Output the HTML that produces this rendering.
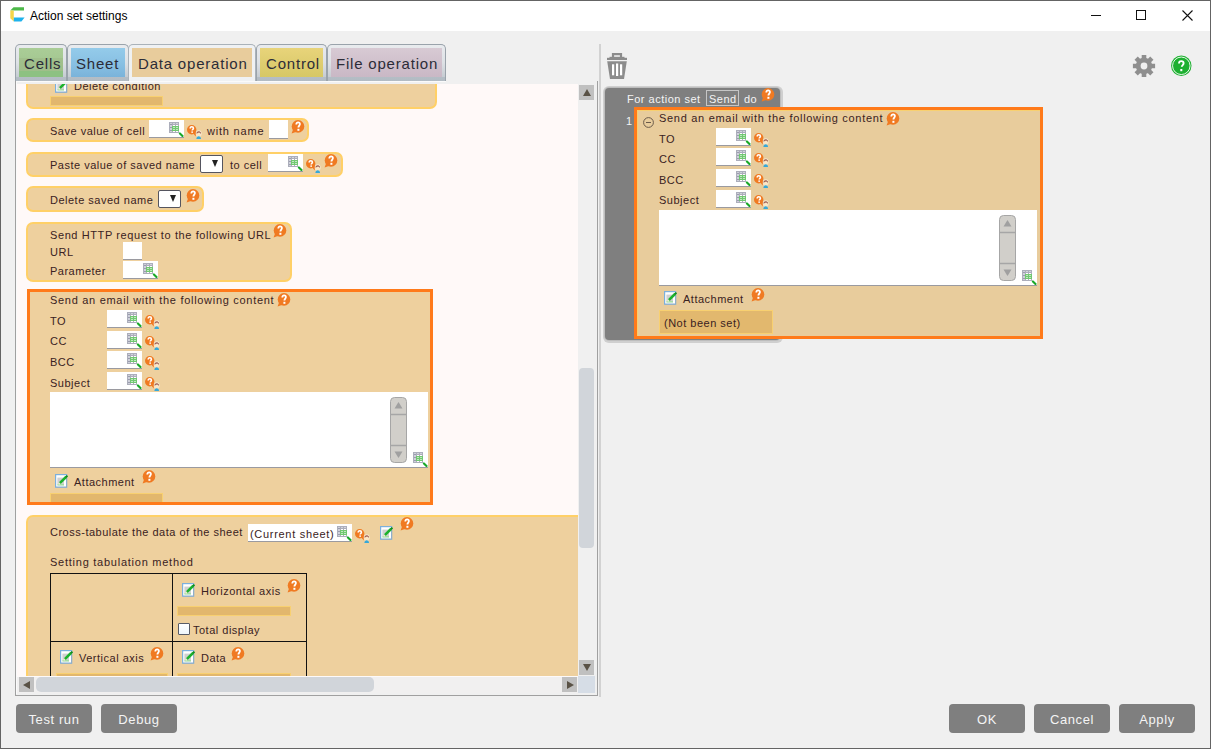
<!DOCTYPE html>
<html><head><meta charset="utf-8">
<style>
*{box-sizing:border-box;margin:0;padding:0}
html,body{width:1211px;height:749px;overflow:hidden;background:#f0f0f0;font-family:"Liberation Sans",sans-serif;position:relative}
.a{position:absolute}
.t{position:absolute;font-size:11px;letter-spacing:0.5px;line-height:14px;white-space:pre;color:#3a2222}
.w{color:#f4f4f4}
.win{left:0;top:0;width:1211px;height:749px;border:1px solid #646464}
.title{left:1px;top:1px;width:1209px;height:30px;background:#fff}
.tab{position:absolute;top:44px;height:37px;border:1px solid #9aa3ab;border-bottom:none;border-radius:5px 5px 0 0;background:linear-gradient(#e9ebee,#dde1e5 50%,#c6ccd2 88%,#b4bdc5 89%,#b2bbc3)}
.tab .in{position:absolute;top:3px;bottom:4px;left:3px;right:3px}
.tab .tx{position:absolute;top:10px;font-size:15px;letter-spacing:0.8px;line-height:18px;white-space:pre;color:#2c2c38}
.panel{left:15px;top:81px;width:583px;height:615px;border:1px solid #a0a0a0;border-top:none;background:#f0f0f0}
.view{left:17px;top:84px;width:561px;height:592px;background:#fff9f8;overflow:hidden}
.pg{position:absolute;left:-17px;top:-84px;width:1211px;height:749px}
.box{position:absolute;background:#eed09e;border:2px solid #ffd067;border-radius:7px}
.sel{position:absolute;border:3px solid #ff7a1a}
.inp{position:absolute;background:#fff;border-bottom:1px solid #9a9aa0}
.bar{position:absolute;background:#e2b76d;border:1px solid #f8d070}
.dd{position:absolute;width:23px;height:18px;background:#fff;border:1px solid #55555f;border-radius:2px}
.dd:after{content:"";position:absolute;left:11px;top:4px;border-left:3.5px solid transparent;border-right:3.5px solid transparent;border-top:7px solid #222}
.btn{position:absolute;top:704px;width:76px;height:29px;background:#7f7f7f;border-radius:4px;color:#f4f4f4;font-size:13px;letter-spacing:0.6px;line-height:14px;padding-top:9px;text-align:center}
svg.i{position:absolute;overflow:visible}
.q{width:14px;height:14px}
.qp{width:15px;height:15px}
.g{width:15px;height:15px}
.e{width:13px;height:14px}
.sb{position:absolute;width:17px;height:66px}
</style></head><body>
<svg width="0" height="0" style="position:absolute">
<defs>
<symbol id="q" viewBox="0 0 14 14"><circle cx="7" cy="6.4" r="6.3" fill="#f07a22"/><path d="M2 9.5 L0.6 13.6 L5.6 11.8Z" fill="#f07a22"/><path d="M5.3 4.4C5.3 3 6.1 2.4 7.1 2.4S8.9 3 8.9 4.1C8.9 5.5 7.4 5.7 7.4 7.6" fill="none" stroke="#fff" stroke-width="1.8"/><rect x="6.4" y="8.8" width="2" height="2" fill="#fff"/></symbol>
<symbol id="qp" viewBox="0 0 15 15"><circle cx="4.7" cy="4.7" r="4.7" fill="#f07a22"/><path d="M6 8.3 L8.8 11.4 L8.9 6.8Z" fill="#f07a22"/><path d="M3.2 3.5c0-1.2.7-1.8 1.6-1.8s1.6.6 1.6 1.6c0 1.2-1.2 1.2-1.2 2.3" fill="none" stroke="#fff" stroke-width="1.6"/><rect x="4.4" y="6.4" width="1.5" height="1.5" fill="#fff"/><ellipse cx="11.7" cy="8.6" rx="3" ry="3.4" fill="#fff" opacity="0.45"/><path d="M10 8 H13.4 V9.6 C13.4 10.5 12.6 10.9 11.7 10.9 S10 10.5 10 9.6Z" fill="#fde6c4"/><path d="M9.6 8.4 C9.4 5.9 14 5.9 13.8 8.4 L13.2 8.4 L12.9 7.6 L10.5 7.6 L10.2 8.4Z" fill="#7c2a24"/><path d="M9.4 14 C9.4 12.2 10.5 11.3 11.7 11.3 S14 12.2 14 14Z" fill="#36a8d8"/></symbol>
<symbol id="grid" viewBox="0 0 15 15"><g shape-rendering="crispEdges"><rect x="0" y="0" width="10" height="11" fill="#acaebb"/><rect x="1" y="1" width="2" height="9" fill="#cfd1da"/><rect x="1" y="2" width="2" height="1" fill="#9a9cae"/><rect x="1" y="5" width="2" height="1" fill="#9a9cae"/><rect x="1" y="8" width="2" height="1" fill="#9a9cae"/><rect x="4" y="1" width="2" height="1" fill="#d2d4dc"/><rect x="7" y="1" width="2" height="1" fill="#d2d4dc"/><rect x="4" y="3" width="2" height="1" fill="#fff"/><rect x="7" y="3" width="2" height="1" fill="#fff"/><rect x="4" y="9" width="2" height="1" fill="#fff"/><rect x="7" y="9" width="2" height="1" fill="#fff"/><rect x="3" y="4" width="7" height="5" fill="#70c870"/><rect x="4" y="5" width="2" height="1" fill="#c0e8c0"/><rect x="7" y="5" width="2" height="1" fill="#c0e8c0"/><rect x="4" y="7" width="2" height="1" fill="#c0e8c0"/><rect x="7" y="7" width="2" height="1" fill="#c0e8c0"/></g><path d="M10.9 11.4 L13.5 14" stroke="#18a828" stroke-width="2.1" stroke-linecap="round"/></symbol>
<symbol id="edit" viewBox="0 0 13 14"><rect x="0.6" y="0.6" width="11" height="12.6" fill="#fff" stroke="#7db0dc" stroke-width="1.2"/><path d="M11.6 1.5V13.3H1" fill="none" stroke="#98aec4" stroke-width="0.8"/><rect x="2.4" y="3.6" width="6.6" height="6.8" fill="#d0d0d0"/><rect x="2.4" y="10" width="6.6" height="1.6" fill="#a6dca6"/><path d="M4.8 9.2 L11 3" stroke="#1cb22c" stroke-width="2.5"/><path d="M10.6 3.4 L12.4 1.6" stroke="#0f8f1e" stroke-width="2"/><path d="M3.6 10.4 L4.9 9.1" stroke="#e8f0c8" stroke-width="1.6"/></symbol>
<symbol id="tsb" viewBox="0 0 17 66"><rect x="0.5" y="0.5" width="16" height="65" rx="4" fill="#d1cfca" stroke="#a6a6a6"/><path d="M1 17.5H16M1 48.5H16" stroke="#a6a6a6" stroke-width="1.4"/><path d="M8.5 5 L12.5 11.5 H4.5Z" fill="#a0a0a0"/><path d="M8.5 61 L12.5 54.5 H4.5Z" fill="#a0a0a0"/></symbol>
</defs></svg>

<div class="a win"></div>
<div class="a title"></div>
<svg class="i" style="left:10px;top:7px" width="15" height="15" viewBox="0 0 15 15"><path d="M3.5 0.3 L14 0.3 L14 3.6 L0.3 3.6Z" fill="#4cb848"/><path d="M0.3 3.6 L3.8 3.6 L3.8 14.6 L0.3 11.2Z" fill="#f5d54a"/><path d="M3.8 10.6 L14.6 10.6 L11.4 14.6 L3.8 14.6Z" fill="#1fb2ec"/></svg>
<div class="t" style="left:30px;top:9px;color:#000;font-size:12px;letter-spacing:0">Action set settings</div>
<div class="a" style="left:1091px;top:15px;width:10px;height:1px;background:#111"></div>
<div class="a" style="left:1136px;top:10px;width:10px;height:10px;border:1px solid #111"></div>
<svg class="i" style="left:1182px;top:10px" width="11" height="11"><path d="M0.5 0.5L10.5 10.5M10.5 0.5L0.5 10.5" stroke="#111" stroke-width="1.1"/></svg>

<!-- tabs -->
<div class="tab" style="left:15px;width:52px"><div class="in" style="background:linear-gradient(#aacd97,#a6c993 33%,#a1c08c 34%,#9fbe8a 80%,#8dc182 81%)"></div><div class="tx" style="left:8px">Cells</div></div>
<div class="tab" style="left:67px;width:62px"><div class="in" style="background:linear-gradient(#94cbea,#88c0e3 55%,#7ab3da)"></div><div class="tx" style="left:8px">Sheet</div></div>
<div class="tab" style="left:128px;width:128px;height:40px;background:#eff1f3;border-color:#aab2b9"><div class="in" style="bottom:7px;background:#e8cc9c"></div><div class="tx" style="left:9px">Data operation</div></div>
<div class="tab" style="left:256px;width:71px"><div class="in" style="background:linear-gradient(#e8d47a,#dfcd70 50%,#d6c866)"></div><div class="tx" style="left:9px">Control</div></div>
<div class="tab" style="left:327px;width:119px"><div class="in" style="background:linear-gradient(#d8cad4,#d0c0cc 55%,#c9b8c5)"></div><div class="tx" style="left:8px">File operation</div></div>

<!-- left panel -->
<div class="a panel"></div>
<div class="a" style="left:16px;top:81px;width:430px;height:1px;background:#fafafa"></div>
<div class="a" style="left:16px;top:82px;width:1px;height:612px;background:#fafafa"></div>
<div class="a view"><div class="pg">
  <div class="box" style="left:26px;top:44px;width:411px;height:65px"></div>
  <svg class="i e" style="left:55px;top:79px"><use href="#edit"/></svg>
  <div class="t" style="left:74px;top:79px">Delete condition</div>
  <div class="bar" style="left:50px;top:96px;width:113px;height:10px"></div>

  <div class="box" style="left:26px;top:118px;width:283px;height:24px"></div>
  <div class="t" style="left:50px;top:124px">Save value of cell</div>
  <div class="inp" style="left:149px;top:120px;width:35px;height:18px"></div>
  <svg class="i g" style="left:169px;top:122px"><use href="#grid"/></svg>
  <svg class="i qp" style="left:187px;top:125px"><use href="#qp"/></svg>
  <div class="t" style="left:207px;top:124px;letter-spacing:0.8px">with name</div>
  <div class="inp" style="left:269px;top:120px;width:19px;height:19px"></div>
  <svg class="i q" style="left:291px;top:120px"><use href="#q"/></svg>

  <div class="box" style="left:26px;top:152px;width:317px;height:25px"></div>
  <div class="t" style="left:50px;top:158px">Paste value of saved name</div>
  <div class="dd" style="left:200px;top:155px"></div>
  <div class="t" style="left:230px;top:158px">to cell</div>
  <div class="inp" style="left:268px;top:154px;width:35px;height:18px"></div>
  <svg class="i g" style="left:288px;top:156px"><use href="#grid"/></svg>
  <svg class="i qp" style="left:306px;top:159px"><use href="#qp"/></svg>
  <svg class="i q" style="left:324px;top:154px"><use href="#q"/></svg>

  <div class="box" style="left:26px;top:186px;width:178px;height:26px"></div>
  <div class="t" style="left:50px;top:193px">Delete saved name</div>
  <div class="dd" style="left:158px;top:190px"></div>
  <svg class="i q" style="left:186px;top:189px"><use href="#q"/></svg>

  <div class="box" style="left:26px;top:222px;width:266px;height:60px"></div>
  <div class="t" style="left:50px;top:228px;letter-spacing:0.6px">Send HTTP request to the following URL</div>
  <svg class="i q" style="left:273px;top:224px"><use href="#q"/></svg>
  <div class="t" style="left:50px;top:245px">URL</div>
  <div class="inp" style="left:123px;top:242px;width:19px;height:18px"></div>
  <div class="t" style="left:50px;top:264px">Parameter</div>
  <div class="inp" style="left:123px;top:261px;width:35px;height:18px"></div>
  <svg class="i g" style="left:143px;top:263px"><use href="#grid"/></svg>

  <!-- email box -->
  <div class="box" style="left:28px;top:290px;width:403px;height:214px;border-width:2px 1px 0 1px;border-radius:0"></div>
  <div class="t" style="left:50px;top:293px;letter-spacing:0.7px">Send an email with the following content</div>
  <svg class="i q" style="left:277px;top:293px"><use href="#q"/></svg>
  <div class="t" style="left:50px;top:314px">TO</div>
  <div class="t" style="left:50px;top:334px">CC</div>
  <div class="t" style="left:50px;top:355px">BCC</div>
  <div class="t" style="left:50px;top:376px">Subject</div>
  <div class="inp" style="left:107px;top:310px;width:35px;height:18px"></div>
  <div class="inp" style="left:107px;top:331px;width:35px;height:18px"></div>
  <div class="inp" style="left:107px;top:351px;width:35px;height:18px"></div>
  <div class="inp" style="left:107px;top:372px;width:35px;height:18px"></div>
  <svg class="i g" style="left:127px;top:312px"><use href="#grid"/></svg>
  <svg class="i g" style="left:127px;top:333px"><use href="#grid"/></svg>
  <svg class="i g" style="left:127px;top:353px"><use href="#grid"/></svg>
  <svg class="i g" style="left:127px;top:374px"><use href="#grid"/></svg>
  <svg class="i qp" style="left:145px;top:315px"><use href="#qp"/></svg>
  <svg class="i qp" style="left:145px;top:336px"><use href="#qp"/></svg>
  <svg class="i qp" style="left:145px;top:356px"><use href="#qp"/></svg>
  <svg class="i qp" style="left:145px;top:377px"><use href="#qp"/></svg>
  <div class="inp" style="left:50px;top:392px;width:378px;height:76px"></div>
  <svg class="i sb" style="left:390px;top:397px"><use href="#tsb"/></svg>
  <svg class="i g" style="left:413px;top:452px"><use href="#grid"/></svg>
  <svg class="i e" style="left:55px;top:474px"><use href="#edit"/></svg>
  <div class="t" style="left:74px;top:475px">Attachment</div>
  <svg class="i q" style="left:142px;top:470px"><use href="#q"/></svg>
  <div class="bar" style="left:50px;top:493px;width:113px;height:10px;border-bottom:none"></div>
  <div class="sel" style="left:27px;top:289px;width:406px;height:216px"></div>

  <!-- cross tab -->
  <div class="box" style="left:26px;top:515px;width:600px;height:220px"></div>
  <div class="t" style="left:50px;top:525px">Cross-tabulate the data of the sheet</div>
  <div class="inp" style="left:248px;top:524px;width:104px;height:18px"></div>
  <div class="t" style="left:250px;top:527px;letter-spacing:0.7px">(Current sheet)</div>
  <svg class="i g" style="left:337px;top:526px"><use href="#grid"/></svg>
  <svg class="i qp" style="left:355px;top:529px"><use href="#qp"/></svg>
  <svg class="i e" style="left:380px;top:526px"><use href="#edit"/></svg>
  <svg class="i q" style="left:400px;top:517px"><use href="#q"/></svg>
  <div class="t" style="left:50px;top:555px;letter-spacing:0.75px">Setting tabulation method</div>
  <div class="a" style="left:50px;top:573px;width:257px;height:140px;border:1px solid #111"></div>
  <div class="a" style="left:172px;top:573px;width:1px;height:140px;background:#111"></div>
  <div class="a" style="left:50px;top:641px;width:257px;height:1px;background:#111"></div>
  <svg class="i e" style="left:182px;top:583px"><use href="#edit"/></svg>
  <div class="t" style="left:201px;top:584px">Horizontal axis</div>
  <svg class="i q" style="left:287px;top:579px"><use href="#q"/></svg>
  <div class="bar" style="left:177px;top:606px;width:114px;height:10px"></div>
  <div class="a" style="left:178px;top:623px;width:12px;height:12px;background:linear-gradient(#fff,#eef6fc);border:1px solid #585c68;border-radius:1px"></div>
  <div class="t" style="left:193px;top:623px">Total display</div>
  <svg class="i e" style="left:60px;top:650px"><use href="#edit"/></svg>
  <div class="t" style="left:79px;top:651px">Vertical axis</div>
  <svg class="i q" style="left:150px;top:647px"><use href="#q"/></svg>
  <svg class="i e" style="left:182px;top:650px"><use href="#edit"/></svg>
  <div class="t" style="left:201px;top:651px">Data</div>
  <svg class="i q" style="left:231px;top:647px"><use href="#q"/></svg>
  <div class="bar" style="left:56px;top:673px;width:112px;height:10px"></div>
  <div class="bar" style="left:177px;top:673px;width:114px;height:10px"></div>
</div></div>

<!-- scrollbars -->
<div class="a" style="left:578px;top:84px;width:17px;height:592px;background:#f0f0f0"></div>
<div class="a" style="left:579px;top:85px;width:15px;height:15px;background:#c0c0c0"></div>
<div class="a" style="left:583px;top:89px;border-left:4px solid transparent;border-right:4px solid transparent;border-bottom:7px solid #5a5246"></div>
<div class="a" style="left:579px;top:368px;width:15px;height:180px;background:#d1d5da;border-radius:4px"></div>
<div class="a" style="left:579px;top:660px;width:15px;height:15px;background:#c0c0c0"></div>
<div class="a" style="left:583px;top:664px;border-left:4px solid transparent;border-right:4px solid transparent;border-top:7px solid #5a5246"></div>
<div class="a" style="left:17px;top:676px;width:562px;height:17px;background:#f1f0f0;border-top:1px solid #fdfafa"></div>
<div class="a" style="left:19px;top:677px;width:15px;height:15px;background:#c0c0c0"></div>
<div class="a" style="left:23px;top:681px;border-top:4px solid transparent;border-bottom:4px solid transparent;border-right:7px solid #5a5246"></div>
<div class="a" style="left:36px;top:677px;width:338px;height:15px;background:#d1d5da;border-radius:5px"></div>
<div class="a" style="left:562px;top:677px;width:15px;height:15px;background:#c0c0c0"></div>
<div class="a" style="left:567px;top:681px;border-top:4px solid transparent;border-bottom:4px solid transparent;border-left:7px solid #5a5246"></div>
<div class="a" style="left:578px;top:676px;width:17px;height:17px;background:#d6dde6"></div>
<!-- splitter -->
<div class="a" style="left:599px;top:44px;width:2px;height:653px;background:#d2d2d2"></div>

<!-- right panel -->
<svg class="i" style="left:607px;top:53px" width="20" height="26" viewBox="0 0 20 26"><path d="M6 4.2 V1.2 H14 V4.2" fill="none" stroke="#8c8c8c" stroke-width="2.2"/><rect x="2.5" y="3.8" width="15" height="1.2" fill="#8c8c8c"/><rect x="0" y="4.8" width="20" height="2.2" fill="#8c8c8c"/><path d="M0.2 8.2 H19.8 L17 26 H3Z" fill="#8c8c8c"/><rect x="5" y="11.3" width="2.2" height="11" fill="#fff"/><rect x="9" y="10.5" width="2.2" height="12.5" fill="#fff"/><rect x="13" y="11.3" width="2.2" height="11" fill="#fff"/></svg>
<svg class="i" style="left:1132px;top:54px" width="24" height="24" viewBox="0 0 24 24"><g stroke="#8f8f8f" stroke-width="4.6" stroke-linecap="butt"><path d="M12 0.9V23.1M0.9 12H23.1M4.15 4.15L19.85 19.85M19.85 4.15L4.15 19.85"/></g><circle cx="12" cy="12" r="8.2" fill="#8f8f8f"/><circle cx="12" cy="12" r="3.4" fill="#f0f0f0"/></svg>
<svg class="i" style="left:1170px;top:55px" width="22" height="22" viewBox="0 0 22 22"><circle cx="11.3" cy="10.8" r="10.2" fill="#1db030"/><circle cx="11.3" cy="10.8" r="8.75" fill="none" stroke="#fff" stroke-width="0.9"/><path d="M9 8.5c0-1.6 1-2.4 2.3-2.4s2.3.8 2.3 2.2c0 1.8-1.8 1.8-1.8 3.5" fill="none" stroke="#fff" stroke-width="1.9"/><rect x="10.3" y="14" width="2" height="2.2" fill="#fff"/></svg>

<div class="a" style="left:603px;top:86px;width:180px;height:257px;border-radius:6px;background:#cfcfcf"></div>
<div class="a" style="left:604px;top:87px;width:177px;height:254px;border-radius:5px;background:#bdbdbd"></div>
<div class="a" style="left:605px;top:88px;width:175px;height:252px;border-radius:4px;background:#7f7f7f"></div>
<div class="t w" style="left:627px;top:92px">For action set</div>
<div class="a" style="left:706px;top:90px;width:33px;height:16px;border:1px solid #c6c6c6"></div>
<div class="t w" style="left:709px;top:92px">Send</div>
<div class="t w" style="left:744px;top:92px">do</div>
<svg class="i q" style="left:761px;top:88px"><use href="#q"/></svg>
<div class="t w" style="left:626px;top:114px">1</div>
<div class="a" style="left:637px;top:110px;width:403px;height:226px;background:#e8cc9c;border-top:1px solid #f8d070;border-left:1px solid #f8d070"></div>
<div class="sel" style="left:634px;top:107px;width:409px;height:232px"></div>
<svg class="i" style="left:643px;top:117px" width="11" height="11"><circle cx="5.5" cy="5.5" r="4.9" fill="none" stroke="#6a5a4a" stroke-width="1"/><path d="M3 5.5H8" stroke="#6a5a4a" stroke-width="1"/></svg>
<div class="t" style="left:659px;top:111px;letter-spacing:0.7px">Send an email with the following content</div>
<svg class="i q" style="left:886px;top:112px"><use href="#q"/></svg>
<div class="t" style="left:659px;top:132px">TO</div>
<div class="t" style="left:659px;top:152px">CC</div>
<div class="t" style="left:659px;top:173px">BCC</div>
<div class="t" style="left:659px;top:193px">Subject</div>
<div class="inp" style="left:716px;top:128px;width:35px;height:18px"></div>
<div class="inp" style="left:716px;top:148px;width:35px;height:18px"></div>
<div class="inp" style="left:716px;top:169px;width:35px;height:18px"></div>
<div class="inp" style="left:716px;top:190px;width:35px;height:18px"></div>
<svg class="i g" style="left:736px;top:130px"><use href="#grid"/></svg>
<svg class="i g" style="left:736px;top:150px"><use href="#grid"/></svg>
<svg class="i g" style="left:736px;top:171px"><use href="#grid"/></svg>
<svg class="i g" style="left:736px;top:192px"><use href="#grid"/></svg>
<svg class="i qp" style="left:754px;top:133px"><use href="#qp"/></svg>
<svg class="i qp" style="left:754px;top:153px"><use href="#qp"/></svg>
<svg class="i qp" style="left:754px;top:174px"><use href="#qp"/></svg>
<svg class="i qp" style="left:754px;top:195px"><use href="#qp"/></svg>
<div class="inp" style="left:659px;top:210px;width:378px;height:76px"></div>
<svg class="i sb" style="left:999px;top:215px"><use href="#tsb"/></svg>
<svg class="i g" style="left:1022px;top:270px"><use href="#grid"/></svg>
<svg class="i e" style="left:664px;top:291px"><use href="#edit"/></svg>
<div class="t" style="left:683px;top:292px">Attachment</div>
<svg class="i q" style="left:751px;top:288px"><use href="#q"/></svg>
<div class="a" style="left:659px;top:310px;width:114px;height:24px;background:#e2b86e;border:1px solid #f8d070"></div>
<div class="t" style="left:664px;top:316px">(Not been set)</div>

<!-- bottom buttons -->
<div class="btn" style="left:16px">Test run</div>
<div class="btn" style="left:101px">Debug</div>
<div class="btn" style="left:949px">OK</div>
<div class="btn" style="left:1034px">Cancel</div>
<div class="btn" style="left:1119px">Apply</div>
</body></html>
